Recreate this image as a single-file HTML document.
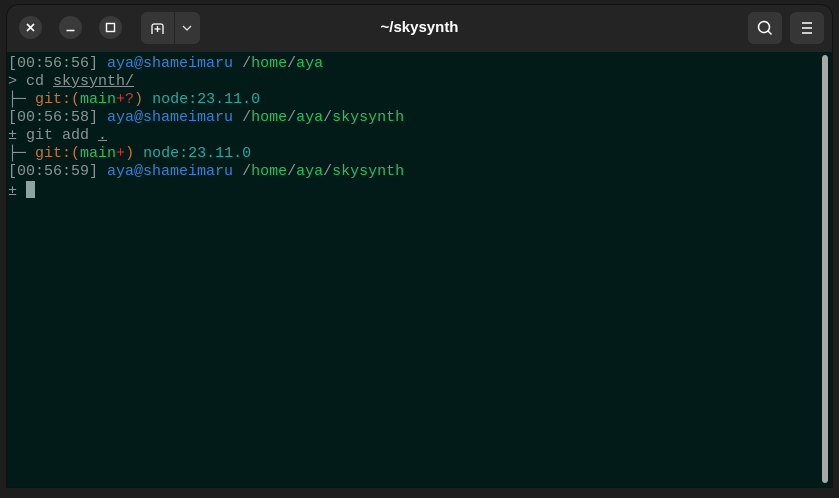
<!DOCTYPE html>
<html><head><style>
body{margin:0;width:839px;height:498px;background:#1e1e1e;overflow:hidden;position:relative;font-family:"Liberation Sans",sans-serif}
.win{position:absolute;left:7px;top:5px;width:825px;height:482px;background:#242424;border-radius:12px 12px 0 0;overflow:hidden;box-shadow:0 0 0 1px #111}
.hdr{position:absolute;left:0;top:0;right:0;height:46px;background:#242424}
.cb{position:absolute;top:11px;width:23px;height:23px;border-radius:50%;background:#3a3a3a}
.btn{position:absolute;top:7px;height:32px;background:#363636;border-radius:6px}
.title{position:absolute;left:0;right:0;top:14px;text-align:center;color:#fff;font-weight:bold;font-size:15px}
.term{position:absolute;left:0;top:47px;right:0;bottom:0;background:#031b18;font-family:"Liberation Mono",monospace;font-size:15px;line-height:18px;padding-top:3px;padding-left:1px;white-space:pre;color:#8a9494}
.b{color:#3a7fd6}.g{color:#2ebc5e}.o{color:#c4743e}.r{color:#d43434}.t{color:#2aa8a0}.u{text-decoration:underline}
.sb{position:absolute;right:4px;top:50px;width:6px;height:428px;background:#a8a8a8;border-radius:3px}
.cur{display:inline-block;width:9px;height:17px;background:#8ea3a3;vertical-align:-3px}
</style></head><body>
<div class="win">
<div class="hdr">
<div class="cb" style="left:12px"><svg width="23" height="23"><path d="M8 8l7 7M15 8l-7 7" stroke="#fff" stroke-width="1.6"/></svg></div>
<div class="cb" style="left:52px"><svg width="23" height="23"><path d="M7.5 14.5h8" stroke="#fff" stroke-width="1.4"/></svg></div>
<div class="cb" style="left:92px"><svg width="23" height="23"><rect x="7.5" y="7.5" width="8" height="8" fill="none" stroke="#fff" stroke-width="1.4"/></svg></div>
<div class="btn" style="left:134px;width:59px"><div style="position:absolute;left:33px;top:0;width:1px;height:32px;background:#242424"></div>
<svg width="59" height="32"><path d="M11 22v-8a2 2 0 0 1 2-2h7a2 2 0 0 1 2 2v8M16.5 14v6M13.5 17h6" fill="none" stroke="#fff" stroke-width="1.3"/><path d="M42 14l4 4 4-4" fill="none" stroke="#ddd" stroke-width="1.3"/></svg></div>
<div class="title">~/skysynth</div>
<div class="btn" style="left:741px;width:34px"><svg width="34" height="32"><circle cx="16" cy="15" r="5.5" fill="none" stroke="#fff" stroke-width="1.5"/><path d="M20 19l3.5 3.5" stroke="#fff" stroke-width="1.5"/></svg></div>
<div class="btn" style="left:783px;width:34px"><svg width="34" height="32"><path d="M12 11h10M12 16h10M12 21h10" stroke="#fff" stroke-width="1.4"/></svg></div>
</div>
<div class="term">[00:56:56] <span class="b">aya@shameimaru</span> /<span class="g">home</span>/<span class="g">aya</span>
&gt; cd <span class="u">skysynth/</span>
├─ <span class="o">git:(</span><span class="g">main</span><span class="r">+?</span><span class="o">)</span> <span class="t">node:23.11.0</span>
[00:56:58] <span class="b">aya@shameimaru</span> /<span class="g">home</span>/<span class="g">aya</span>/<span class="g">skysynth</span>
± git add <span class="u">.</span>
├─ <span class="o">git:(</span><span class="g">main</span><span class="r">+</span><span class="o">)</span> <span class="t">node:23.11.0</span>
[00:56:59] <span class="b">aya@shameimaru</span> /<span class="g">home</span>/<span class="g">aya</span>/<span class="g">skysynth</span>
± <span class="cur"></span></div>
<div class="sb"></div>
</div>
</body></html>
